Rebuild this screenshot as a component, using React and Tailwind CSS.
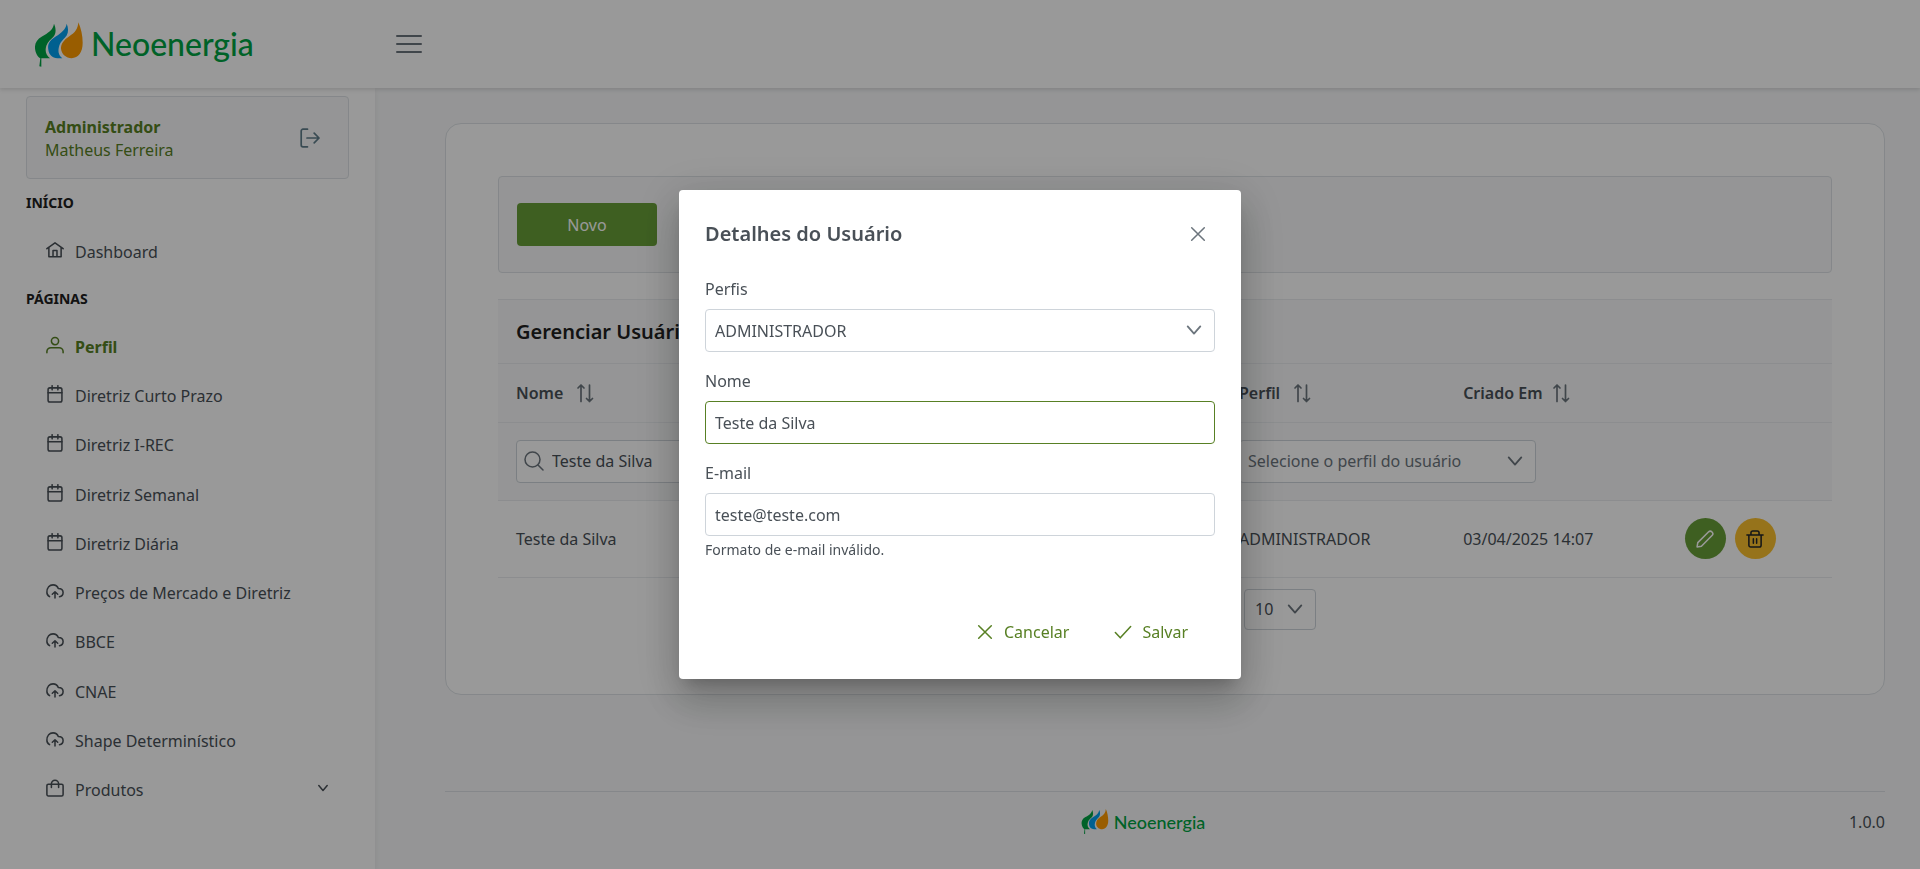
import { useState } from "react";

const paths = {
  home: (
    <path d="M1 8.6 10 2l9 6.600M3.200 7.400V17.500H16.800V7.400M7.800 17.500V10.500H12.200V17.500M3.200 17.500H16.800" />
  ),
  user: (
    <>
      <circle cx="10" cy="5.600" r="4" />
      <path d="M1 18.500v-1.200c0-2.500 2-4.300 4.500-4.300h9c2.500 0 4.500 1.800 4.500 4.300v1.200" />
    </>
  ),
  calendar: (
    <>
      <rect x="2.300" y="3.200" width="15.400" height="15.800" rx="2" />
      <path d="M2.300 8.600h15.400M6.800 .8v4.600M13.200 .8v4.600" />
    </>
  ),
  cloud: (
    <>
      <path d="M4 16.300A5.200 5.200 0 0 1 1 11.500C1 6.300 4 3.200 7.800 3.200c2.700 0 4.900 1.500 5.800 3.900 3.200 0 5.400 2 5.400 4.700 0 2.400-1.300 4.300-4 4.500" />
      <path d="M10 17.800v-6.600M7 13.600l3-2.800 3 2.800" />
    </>
  ),
  bag: (
    <>
      <rect x="1" y="5.800" width="18" height="13" rx="1.600" />
      <path d="M6 9.500V5.300a4 4 0 0 1 8 0v4.200" />
    </>
  ),
  logout: (
    <>
      <path d="M7.500 1.200H3A1.800 1.800 0 0 0 1.200 3v14A1.800 1.800 0 0 0 3 18.800h4.500" />
      <path d="M7 10h12M14.200 5.200 19 10l-4.800 4.800" />
    </>
  ),
  search: (
    <>
      <circle cx="8.500" cy="8.500" r="7.500" />
      <path d="m14 14 5 5" />
    </>
  ),
  chevron: <path d="m3 6 7 8 7-8" />,
  close: <path d="M3 3l14 14M17 3 3 17" />,
  check: <path d="m1.500 10.500 5.500 6L18.500 4" />,
  sort: <path d="M6 18.500V2M3 5l3-3 3 3M14.500 2v16.500M11.500 15.500l3 3 3-3" />,
  pencil: (
    <path d="M1.200 18.800 2 14 13.800 2.200a2.700 2.700 0 0 1 4 4L6 18Z" />
  ),
  trash: (
    <path d="M1 5.500h18M3.200 5.500v11.500a2 2 0 0 0 2 2h9.600a2 2 0 0 0 2-2V5.500M5.500 5.500V3a2 2 0 0 1 2-2h5a2 2 0 0 1 2 2v2.500M8.200 9.800v4.800M11.800 9.800v4.800" />
  ),
};

function Icon({ name, className = "size-[18px]", weight = 1.7 }) {
  return (
    <svg
      viewBox="0 0 20 20"
      className={"shrink-0 " + className}
      fill="none"
      stroke="currentColor"
      strokeWidth={weight}
      strokeLinecap="round"
      strokeLinejoin="round"
      aria-hidden="true"
    >
      {paths[name]}
    </svg>
  );
}

function Flames({ className }) {
  return (
    <svg viewBox="45 33 144 134" className={className} aria-hidden="true">
      <path
        fill="#00a443"
        d="M102 38C99 57 84 66 66 76C50 85 44 97 45 111C46 126 54 138 61 141L58 165L64 167L64 141H90C78 132 74 120 79 104C83 91 94 84 101 76C109 66 108 51 102 38Z"
      />
      <path
        fill="#00a0f0"
        d="M140 38C137 56 124 66 106 77C89 88 82 99 85 116C87 131 97 141 112 141H127C115 132 113 119 118 103C122 90 134 82 140 73C146 63 145 49 140 38Z"
      />
      <path
        fill="#ff9c00"
        d="M175 33C174 52 165 64 148 75C131 86 122 99 123 113C125 130 138 141 155 141C175 141 188 124 188 95C188 72 183 51 175 33Z"
      />
    </svg>
  );
}

const pages = [
  ["user", "Perfil"],
  ["calendar", "Diretriz Curto Prazo"],
  ["calendar", "Diretriz I-REC"],
  ["calendar", "Diretriz Semanal"],
  ["calendar", "Diretriz Diária"],
  ["cloud", "Preços de Mercado e Diretriz"],
  ["cloud", "BBCE"],
  ["cloud", "CNAE"],
  ["cloud", "Shape Determinístico"],
  ["bag", "Produtos"],
];

function MenuItem({ icon, label }) {
  const active = label === "Perfil";
  return (
    <li className="flex">
      <a
        href="#"
        className={
          "flex grow items-center gap-[11px] px-5 " +
          (active ? "font-bold text-[#588024]" : "text-[#495057]")
        }
      >
        <Icon name={icon} className="mb-1 size-[18px]" />
        <span className="grow">{label}</span>
        {label === "Produtos" && <Icon name="chevron" className="mb-1 size-3" weight={2.5} />}
      </a>
    </li>
  );
}

function Sidebar() {
  return (
    <aside className="flex w-[375px] shrink-0 flex-col bg-white px-[26px] pt-2 shadow-[0_2px_6px_rgba(0,0,0,0.08)]">
      <div className="flex items-center justify-between rounded-sm border border-[#dee2e6] bg-[#f8f9fa] pt-4 pr-7 pb-4 pl-[18px] text-[#588024]">
        <div className="pt-[3px] leading-[23px]">
          <p className="font-bold">Administrador</p>
          <p>Matheus Ferreira</p>
        </div>
        <button type="button" aria-label="Sair" className="text-[#607d8b]">
          <Icon name="logout" className="size-5" />
        </button>
      </div>
      <nav>
        <h2 className="pt-[14px] text-sm leading-5 font-bold text-[#212121]">INÍCIO</h2>
        <ul className="mt-[14px] grid h-[49px]">
          <MenuItem icon="home" label="Dashboard" />
        </ul>
        <h2 className="pt-[13px] text-sm leading-5 font-bold text-[#212121]">PÁGINAS</h2>
        <ul className="mt-[13px] grid min-h-[493px] auto-rows-fr">
          {pages.map(([icon, label]) => (
            <MenuItem key={label} icon={icon} label={label} />
          ))}
        </ul>
      </nav>
    </aside>
  );
}

function SortHeader({ children, gap }) {
  return (
    <th scope="col" className="px-[18px] text-left font-semibold">
      <button type="button" className={"flex items-center " + gap}>
        {children}
        <Icon name="sort" className="size-5 text-[#6c757d]" />
      </button>
    </th>
  );
}

function UsersTable() {
  return (
    <table className="mt-[26px] w-full table-fixed border-collapse">
      <caption className="border-y border-[#e9ecef] bg-[#f8f9fa] px-[18px] py-4 text-left text-[20px] leading-[31px] font-semibold text-[#212121]">
        Gerenciar Usuários
      </caption>
      <colgroup>
        <col className="w-[27%]" />
        <col className="w-[27.2%]" />
        <col className="w-[16.8%]" />
        <col className="w-[16%]" />
        <col />
      </colgroup>
      <thead className="bg-[#f8f9fa]">
        <tr className="h-[58px] border-b border-[#e9ecef]">
          <SortHeader gap="gap-3">Nome</SortHeader>
          <SortHeader gap="gap-3">E-mail</SortHeader>
          <SortHeader gap="gap-3">Perfil</SortHeader>
          <SortHeader gap="gap-2">Criado Em</SortHeader>
          <td />
        </tr>
        <tr className="h-[78px] border-b border-[#e9ecef]">
          <td className="px-[18px]">
            <div className="relative">
              <Icon
                name="search"
                className="absolute top-[11px] left-2 size-5 text-[#6c757d]"
                weight={1.5}
              />
              <input
                aria-label="Filtrar por nome"
                defaultValue="Teste da Silva"
                className="block h-[43px] w-full rounded-sm border border-[#ced4da] bg-white pl-[35px]"
              />
            </div>
          </td>
          <td className="px-[18px]" />
          <td colSpan={3} className="px-[18px]">
            <div className="relative w-[297px]">
              <select
                aria-label="Filtrar por perfil"
                className="block h-[43px] w-full appearance-none rounded-sm border border-[#ced4da] bg-white pl-2 text-[#6c757d]"
              >
                <option>Selecione o perfil do usuário</option>
              </select>
              <Icon
                name="chevron"
                className="pointer-events-none absolute top-3 right-3 size-[18px] text-[#6c757d]"
                weight={2}
              />
            </div>
          </td>
        </tr>
      </thead>
      <tbody>
        <tr className="h-[77px] border-b border-[#e9ecef]">
          <td className="px-[18px]">Teste da Silva</td>
          <td className="px-[18px]">teste@teste.com</td>
          <td className="px-[18px]">ADMINISTRADOR</td>
          <td className="px-[18px]">03/04/2025 14:07</td>
          <td className="px-[26px]">
            <div className="flex gap-[9px]">
              <button
                type="button"
                aria-label="Editar"
                className="flex size-[41px] items-center justify-center rounded-full bg-[#689f38] text-white"
              >
                <Icon name="pencil" />
              </button>
              <button
                type="button"
                aria-label="Excluir"
                className="flex size-[41px] items-center justify-center rounded-full bg-[#fbc02d] text-[#212529]"
              >
                <Icon name="trash" />
              </button>
            </div>
          </td>
        </tr>
      </tbody>
    </table>
  );
}

function DialogField({ id, label, children }) {
  return (
    <div className="flex flex-col gap-2">
      <label htmlFor={id} className="leading-6">
        {label}
      </label>
      {children}
    </div>
  );
}

function UserDialog() {
  const [name, setName] = useState("Teste da Silva");
  const [email, setEmail] = useState("teste@teste.com");
  return (
    <div className="fixed inset-0 z-10 flex items-center justify-center bg-black/40">
      <div
        role="dialog"
        aria-modal="true"
        aria-labelledby="dialog-title"
        className="w-[562px] rounded-sm bg-white text-[#495057] shadow-[0_11px_15px_-7px_rgba(0,0,0,0.2),0_24px_38px_3px_rgba(0,0,0,0.14),0_9px_46px_8px_rgba(0,0,0,0.12)]"
      >
        <header className="flex items-center justify-between pt-[26px] pr-[25px] pl-[26px]">
          <h2 id="dialog-title" className="text-[20px] leading-9 font-semibold">
            Detalhes do Usuário
          </h2>
          <button
            type="button"
            aria-label="Fechar"
            className="flex size-9 items-center justify-center text-[#6c757d]"
          >
            <Icon name="close" />
          </button>
        </header>
        <form className="flex flex-col gap-[17px] px-[26px] pt-[25px]">
          <DialogField id="role" label="Perfis">
            <div className="relative">
              <select
                id="role"
                className="block h-[43px] w-full appearance-none rounded-sm border border-[#ced4da] bg-white pl-[9px]"
              >
                <option>ADMINISTRADOR</option>
              </select>
              <Icon
                name="chevron"
                className="pointer-events-none absolute top-3 right-3 size-[18px] text-[#6c757d]"
                weight={2}
              />
            </div>
          </DialogField>
          <DialogField id="name" label="Nome">
            <input
              id="name"
              value={name}
              onChange={(e) => setName(e.target.value)}
              className="h-[43px] rounded-sm border border-[#588024] pl-[9px] outline-none"
            />
          </DialogField>
          <DialogField id="email" label="E-mail">
            <div>
              <input
                id="email"
                type="email"
                value={email}
                onChange={(e) => setEmail(e.target.value)}
                className="block h-[43px] w-full rounded-sm border border-[#ced4da] pl-[9px] outline-none"
              />
              <small className="mt-1 block text-[14px] leading-5">
                Formato de e-mail inválido.
              </small>
            </div>
          </DialogField>
        </form>
        <footer className="flex justify-end gap-[9px] px-[35px] pt-[51px] pb-[26px] text-[#588024]">
          <button type="button" className="flex h-[42px] items-center gap-[10px] px-[18px]">
            <Icon name="close" />
            Cancelar
          </button>
          <button type="button" className="flex h-[42px] items-center gap-[10px] px-[18px]">
            <Icon name="check" />
            Salvar
          </button>
        </footer>
      </div>
    </div>
  );
}

export default function App() {
  return (
    <div className="flex min-h-screen flex-col bg-[#f8f9fa] font-['Noto_Sans',sans-serif] text-[16px] leading-6 text-[#495057]">
      <header className="z-1 flex h-[88px] items-center bg-white shadow-[0_2px_4px_rgba(0,0,0,0.12)]">
        <a href="#" className="flex w-[375px] items-center gap-2 pl-[35px] font-['Lato',sans-serif] text-[32px] leading-10 font-medium text-[#00a443]">
          <Flames className="h-[45px] w-12" />
          Neoenergia
        </a>
        <button type="button" aria-label="Menu" className="ml-[21px] flex w-[26px] flex-col gap-[6px]">
          <span className="h-[2px] rounded-full bg-[#6c757d]" />
          <span className="h-[2px] rounded-full bg-[#6c757d]" />
          <span className="h-[2px] rounded-full bg-[#6c757d]" />
        </button>
      </header>
      <div className="flex grow">
        <Sidebar />
        <div className="flex grow flex-col justify-between pt-[35px] pr-[35px] pl-[70px]">
          <main className="rounded-2xl border border-[#dee2e6] bg-white px-[52px] pt-[52px] pb-[64px]">
            <div className="rounded-sm border border-[#dee2e6] bg-[#f8f9fa] px-[18px] py-[26px]">
              <button
                type="button"
                className="h-[43px] w-[140px] rounded-sm bg-[#689f38] text-white"
              >
                Novo
              </button>
            </div>
            <UsersTable />
            <div className="flex justify-center pt-[11px] pl-[230px]">
              <div className="relative w-[72px]">
                <select
                  aria-label="Linhas por página"
                  className="block h-[41px] w-full appearance-none rounded-sm border border-[#ced4da] bg-white pl-[10px]"
                >
                  <option>10</option>
                </select>
                <Icon
                  name="chevron"
                  className="pointer-events-none absolute top-[11px] right-3 size-[18px] text-[#6c757d]"
                  weight={2}
                />
              </div>
            </div>
          </main>
          <footer className="flex items-center border-t border-[#dee2e6] pt-[17px] pb-[35px]">
            <span className="flex grow items-center justify-center gap-[5px] font-['Lato',sans-serif] text-[18px] leading-6 font-medium text-[#00a443]">
              <Flames className="h-[25px] w-7" />
              Neoenergia
            </span>
            <span className="pl-2">1.0.0</span>
          </footer>
        </div>
      </div>
      <UserDialog />
    </div>
  );
}
